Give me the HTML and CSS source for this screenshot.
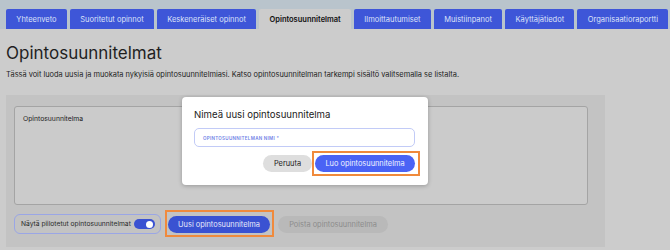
FILE: index.html
```html
<!DOCTYPE html>
<html lang="fi">
<head>
<meta charset="utf-8">
<link rel="stylesheet" href="styles.css">
</head>
<body>
<nav class="tabs">
  <a class="tab">Yhteenveto</a>
  <a class="tab">Suoritetut opinnot</a>
  <a class="tab">Keskeneräiset opinnot</a>
  <a class="tab active">Opintosuunnitelmat</a>
  <a class="tab">Ilmoittautumiset</a>
  <a class="tab">Muistiinpanot</a>
  <a class="tab">Käyttäjätiedot</a>
  <a class="tab">Organisaatioraportti</a>
</nav>
<main class="content">
  <h1 class="title">Opintosuunnitelmat</h1>
  <p class="desc">Tässä voit luoda uusia ja muokata nykyisiä opintosuunnitelmiasi. Katso opintosuunnitelman tarkempi sisältö valitsemalla se listalta.</p>
  <section class="panel">
    <div class="listbox">Opintosuunnitelma</div>
    <div class="actions">
      <label class="toggle">
        <span class="toggle-text">Näytä piilotetut opintosuunnitelmat</span>
        <span class="switch"><span class="knob"></span></span>
      </label>
      <button class="btn primary highlight">Uusi opintosuunnitelma</button>
      <button class="btn disabled">Poista opintosuunnitelma</button>
    </div>
  </section>
</main>
<div class="dialog">
  <h2 class="dialog-title">Nimeä uusi opintosuunnitelma</h2>
  <div class="field"><span class="field-label">Opintosuunnitelman nimi *</span></div>
  <div class="dialog-actions">
    <button class="btn cancel">Peruuta</button>
    <button class="btn bright highlight">Luo opintosuunnitelma</button>
  </div>
</div>
</body>
</html>
```

FILE: styles.css
```css
* { box-sizing: border-box; }
html, body { margin: 0; padding: 0; }
body {
  width: 670px;
  height: 250px;
  background: #cccccc;
  font-family: Inter, "Noto Sans", sans-serif;
  color: #222;
  position: relative;
  overflow: hidden;
}
.tabs {
  display: flex;
  align-items: flex-end;
  gap: 3px;
  height: 29px;
  padding-left: 6px;
  background: #b9c4cc;
}
.tab {
  flex: none;
  white-space: nowrap;
  height: 20px;
  display: flex;
  align-items: center;
  padding: 0 10.3px;
  background: #3e56d8;
  color: #dde2f8;
  font-size: 7.5px;
  border-radius: 2px 2px 0 0;
}
.tab.active {
  background: #cccccc;
  color: #111;
  font-weight: 600;
}
.content { padding: 0 6px; }
.title {
  margin: 14px 0 0;
  font-size: 17px;
  font-weight: 400;
  line-height: 20px;
  color: #1f1f1f;
}
.desc {
  margin: 7px 0 0;
  font-size: 7.4px;
  line-height: 10px;
  color: #222;
  white-space: nowrap;
}
.panel {
  margin-top: 15px;
  width: 599px;
  height: 152px;
  background: #c3c3c3;
  padding: 11px 17px 0 8px;
}
.listbox {
  height: 99px;
  border: 1px solid #a4a4a4;
  border-radius: 3px;
  background: #cbcbcb;
  padding: 7px 8px;
  font-size: 6.8px;
  color: #222;
}
.actions {
  display: flex;
  align-items: center;
  margin-top: 9px;
  gap: 7px;
}
.toggle {
  flex: none;
  width: 147px;
  height: 20px;
  border: 1px solid #9aa6e6;
  border-radius: 6px;
  display: flex;
  align-items: center;
  justify-content: space-between;
  padding: 0 5px 0 6px;
  font-size: 6.7px;
  color: #2a2a2a;
  white-space: nowrap;
}
.switch {
  flex: none;
  width: 21px;
  height: 10px;
  border-radius: 5px;
  background: #3a52d2;
  display: flex;
  align-items: center;
  justify-content: flex-end;
  padding-right: 2px;
}
.knob {
  width: 7px;
  height: 7px;
  border-radius: 50%;
  background: #fff;
}
.btn {
  flex: none;
  border: 0;
  font-family: inherit;
  height: 17px;
  border-radius: 9px;
  font-size: 7.4px;
  padding: 0;
  position: relative;
  white-space: nowrap;
}
.primary { width: 102px; background: #3a52d2; color: #e8ebfb; }
.disabled { width: 110px; background: #b9b9b9; color: #8c8c8c; margin-left: 1px; }
.highlight::after {
  content: "";
  position: absolute;
  left: -3px; right: -4px; top: -6px; bottom: -4px;
  border: 2px solid #f08a3c;
}
.dialog {
  position: absolute;
  left: 182px;
  top: 97px;
  width: 246px;
  height: 88px;
  background: #fff;
  border-radius: 4px;
  box-shadow: 0 1px 4px rgba(0,0,0,0.25);
  padding: 11px 13px 0 12px;
}
.dialog-title {
  margin: 0;
  font-size: 9.6px;
  font-weight: 400;
  line-height: 14px;
  color: #222;
}
.field {
  margin-top: 6px;
  height: 19px;
  border: 1px solid #c2cbf7;
  border-radius: 5px;
  padding: 2px 0 0 8px;
  line-height: 6px;
}
.field-label {
  font-size: 4.5px;
  text-transform: uppercase;
  letter-spacing: 0.3px;
  color: #6f7fe6;
  font-weight: 600;
}
.dialog-actions {
  display: flex;
  justify-content: flex-end;
  gap: 3px;
  margin-top: 8px;
}
.cancel { width: 49px; background: #dedede; color: #222; }
.bright { width: 100px; background: #4a63f5; color: #f2f4ff; }
.bright.highlight::after { left: -3px; right: -5px; top: -4px; bottom: -4px; }
```
